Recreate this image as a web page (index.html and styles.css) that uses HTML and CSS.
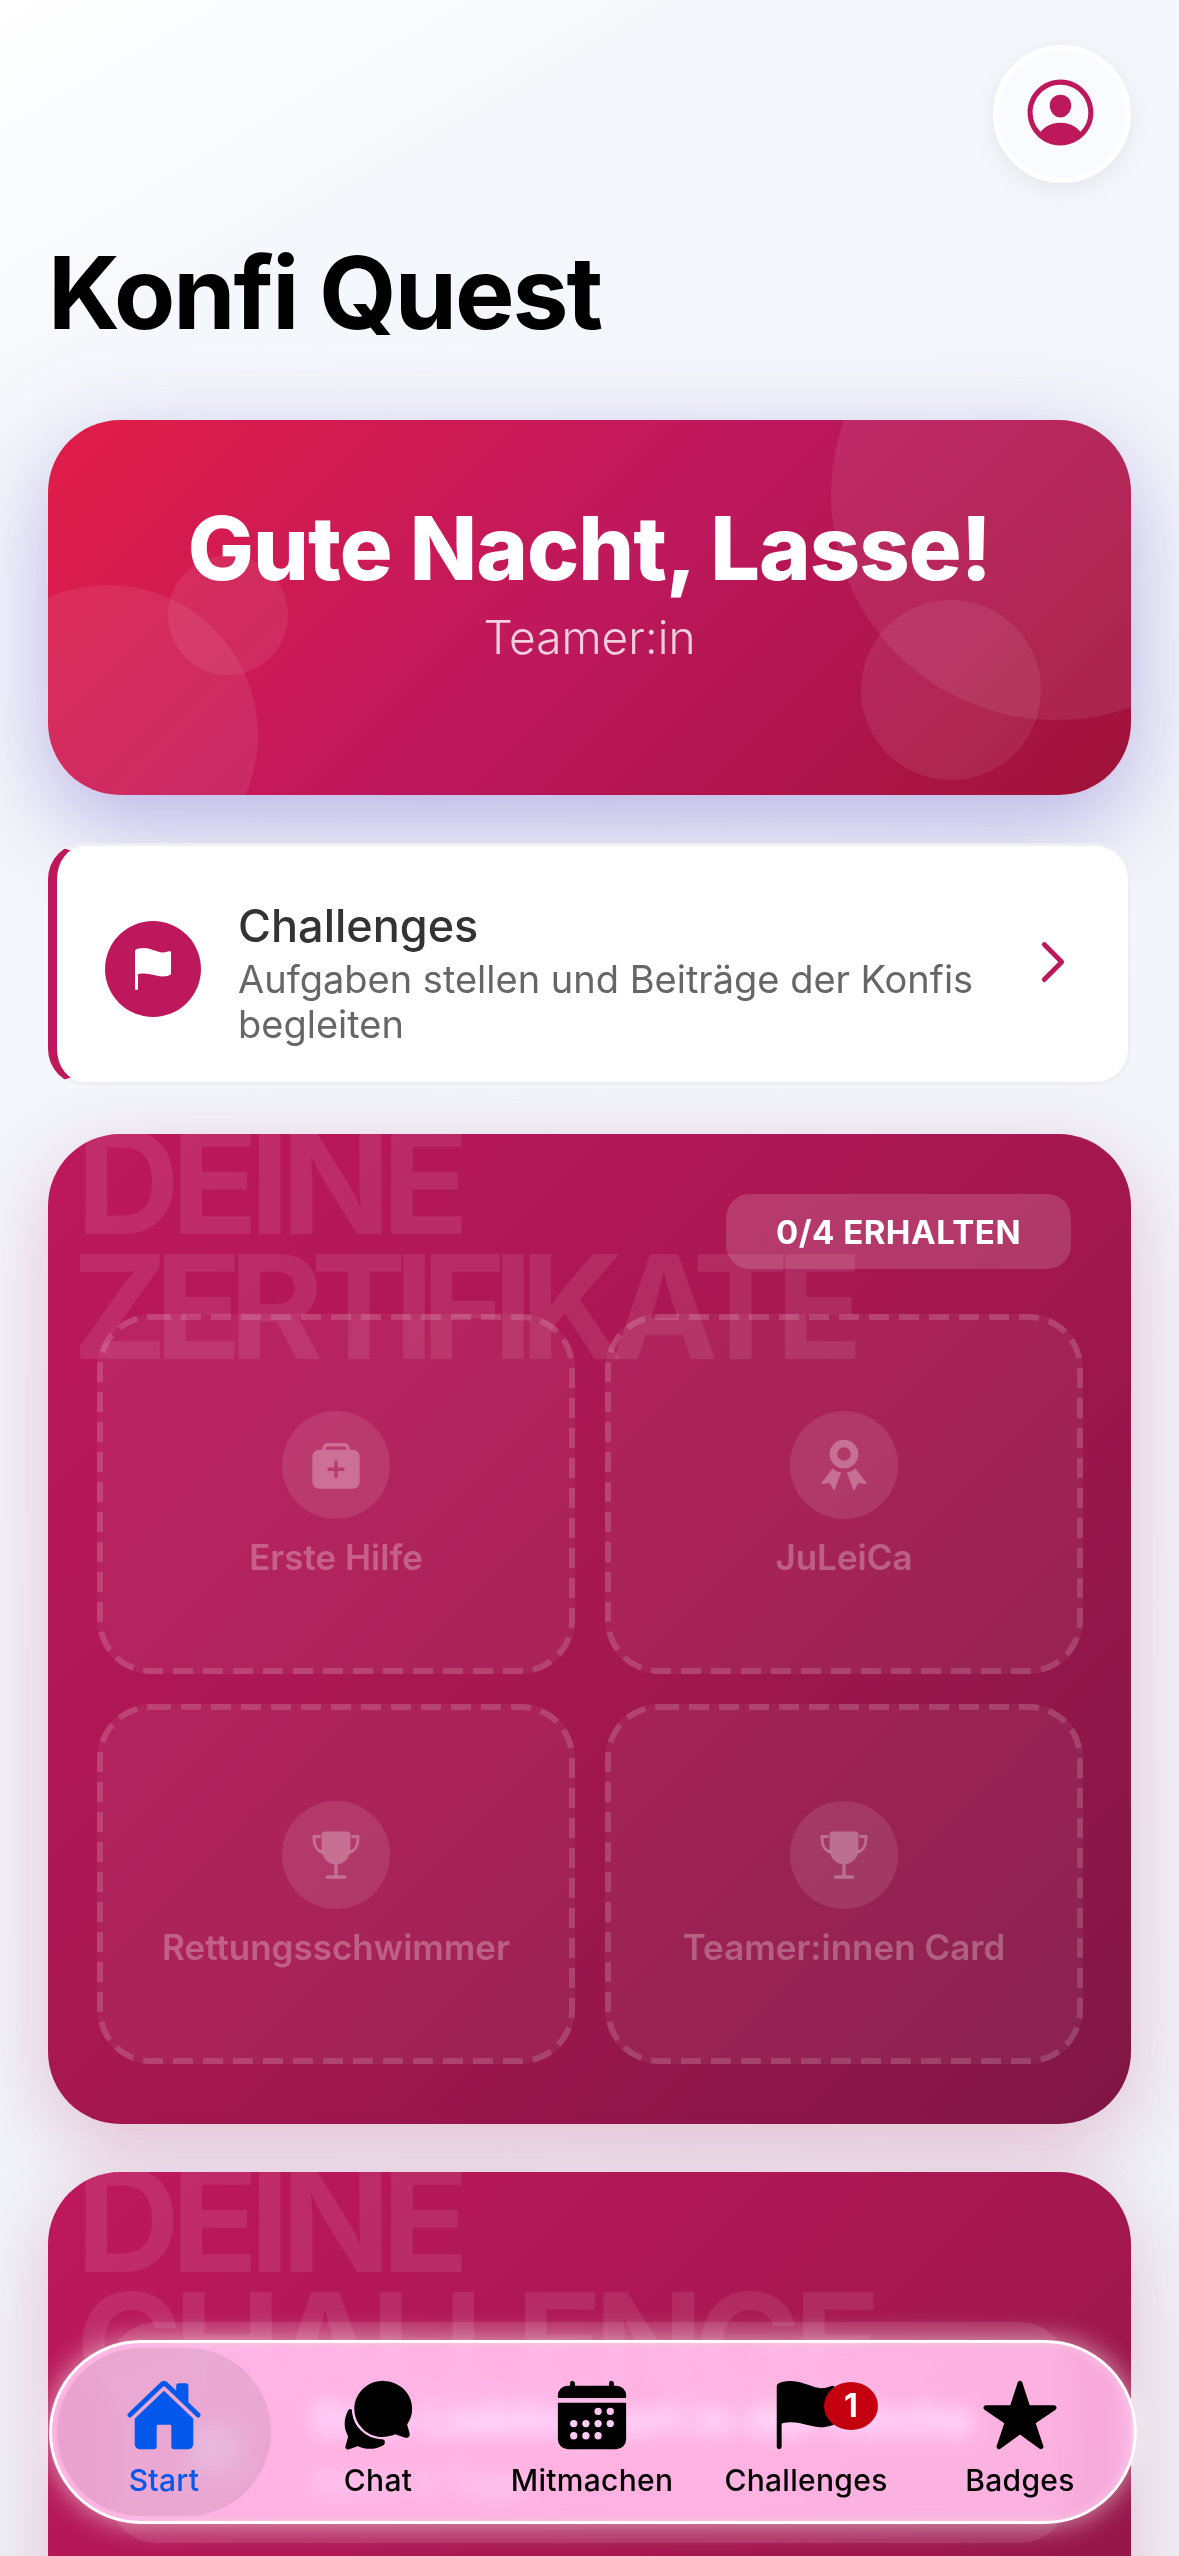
FILE: index.html
```html
<!DOCTYPE html>
<html lang="de">
<head>
    <meta charset="UTF-8">
    <meta name="viewport" content="width=device-width, initial-scale=1.0">
    <title>Konfi Quest</title>
    <link rel="stylesheet" href="styles.css">
</head>
<body>

<div class="page">
    <!-- Header -->
    <div class="top-row">
        <button class="profile-btn">
            <svg class="profile-icon" viewBox="0 0 512 512"><path d="M258.9 48C141.92 46.42 46.42 141.92 48 258.9c1.56 112.19 92.91 203.54 205.1 205.1 117 1.6 212.48-93.9 210.88-210.88C462.44 140.91 371.09 49.56 258.9 48zm126.42 327.25a4 4 0 01-6.14-.32 124.27 124.27 0 00-32.35-29.59C321.37 329 289.11 320 256 320s-65.37 9-90.83 25.34a124.24 124.24 0 00-32.35 29.58 4 4 0 01-6.14.32A175.32 175.32 0 0180 259c-1.63-97.31 78.22-178.76 175.57-179S432 158.81 432 256a175.32 175.32 0 01-46.68 119.25z"/><path d="M256 144c-19.72 0-37.55 7.39-50.22 20.82s-19 32-17.57 51.93C191.11 256 221.52 288 256 288s64.83-32 67.79-71.25c1.48-19.67-4.8-38-17.68-51.67C293.39 151.44 275.59 144 256 144z"/></svg>
        </button>
    </div>
    <h1 class="page-title">Konfi Quest</h1>

    <!-- Greeting -->
    <section class="hero">
        <span class="blob blob-big"></span>
        <span class="blob blob-right"></span>
        <span class="blob blob-left"></span>
        <span class="blob blob-small"></span>
        <h2 class="hero-title">Gute Nacht, Lasse!</h2>
        <p class="hero-role">Teamer:in</p>
    </section>

    <!-- Challenges link -->
    <a class="link-card">
        <span class="link-icon">
            <svg viewBox="0 0 512 512"><path d="M80 480a16 16 0 01-16-16V68.13a24 24 0 0111.9-20.72C88 40.38 112.38 32 160 32c37.21 0 78.83 14.71 115.55 27.68C305.12 70.13 333.05 80 352 80a183.84 183.84 0 0071-14.5 18 18 0 0125 16.58v219.36a20 20 0 01-12 18.31c-8.71 3.81-40.51 16.25-84 16.25-24.14 0-54.38-7.14-86.39-14.71C229.63 312.79 192.43 304 160 304c-36.87 0-55.74 5.58-64 9.11V464a16 16 0 01-16 16z"/></svg>
        </span>
        <span class="link-text">
            <span class="link-title">Challenges</span>
            <span class="link-desc">Aufgaben stellen und Beiträge der Konfis begleiten</span>
        </span>
        <svg class="link-chevron" viewBox="0 0 512 512"><path d="M184 112l144 144-144 144"/></svg>
    </a>

    <!-- Certificates -->
    <section class="panel">
        <div class="panel-bg-title">DEINE<br><span class="tight">ZERTIFIKATE</span></div>
        <div class="panel-head">
            <span class="count-pill">0/4 ERHALTEN</span>
        </div>
        <div class="cert-grid">
            <div class="cert">
                <svg class="cert-dash"><rect x="3" y="3" rx="51" ry="51"/></svg>
                <span class="cert-icon">
                    <svg viewBox="0 0 512 512"><path fill-rule="evenodd" d="M176 48h160a48 48 0 0148 48v16h32a64 64 0 0164 64v240a64 64 0 01-64 64H96a64 64 0 01-64-64V176a64 64 0 0164-64h32V96a48 48 0 0148-48zm0 32a16 16 0 00-16 16v16h192V96a16 16 0 00-16-16zm64 136v64h-64v32h64v64h32v-64h64v-32h-64v-64z"/></svg>
                </span>
                <span class="cert-name">Erste Hilfe</span>
            </div>
            <div class="cert">
                <svg class="cert-dash"><rect x="3" y="3" rx="51" ry="51"/></svg>
                <span class="cert-icon">
                    <svg viewBox="0 0 512 512"><path fill-rule="evenodd" d="M256 16a136 136 0 110 272 136 136 0 010-272zm0 72a64 64 0 100 128 64 64 0 000-128z"/><path d="M148 288c24 22 50 34 82 36l-62 164a8 8 0 01-14 1l-34-62-70 10a8 8 0 01-8-11zM364 288c-24 22-50 34-82 36l62 164a8 8 0 0014 1l34-62 70 10a8 8 0 008-11z"/></svg>
                </span>
                <span class="cert-name">JuLeiCa</span>
            </div>
            <div class="cert">
                <svg class="cert-dash"><rect x="3" y="3" rx="51" ry="51"/></svg>
                <span class="cert-icon">
                    <svg viewBox="0 0 512 512"><path d="M144 32h224a24 24 0 0124 24v152c0 70-56 128-120 134v106h64a16 16 0 0116 16v16H160v-16a16 16 0 0116-16h64V342c-64-6-120-64-120-134V56a24 24 0 0124-24z"/><path d="M112 80H48v32c0 56 32 104 80 120M400 80h64v32c0 56-32 104-80 120" fill="none" stroke="currentColor" stroke-width="28"/></svg>
                </span>
                <span class="cert-name">Rettungsschwimmer</span>
            </div>
            <div class="cert">
                <svg class="cert-dash"><rect x="3" y="3" rx="51" ry="51"/></svg>
                <span class="cert-icon">
                    <svg viewBox="0 0 512 512"><path d="M144 32h224a24 24 0 0124 24v152c0 70-56 128-120 134v106h64a16 16 0 0116 16v16H160v-16a16 16 0 0116-16h64V342c-64-6-120-64-120-134V56a24 24 0 0124-24z"/><path d="M112 80H48v32c0 56 32 104 80 120M400 80h64v32c0 56-32 104-80 120" fill="none" stroke="currentColor" stroke-width="28"/></svg>
                </span>
                <span class="cert-name">Teamer:innen Card</span>
            </div>
        </div>
    </section>

    <!-- Current challenge -->
    <section class="panel panel-challenge">
        <div class="panel-bg-title">DEINE<br>CHALLENGE</div>
        <div class="challenge-box">
            <span class="challenge-icon"></span>
            <span class="challenge-text">
                <span class="challenge-title">Dein Lieblingsort in der Kirche</span>
                <span class="challenge-meta">Noch 3 Tage</span>
            </span>
        </div>
    </section>
</div>

<!-- Tab bar -->
<nav class="tabbar">
    <a class="tab tab-active">
        <svg viewBox="0 0 512 512"><path d="M261.56 101.28a8 8 0 00-11.06 0L66.4 277.15a8 8 0 00-2.47 5.79L63.9 448a32 32 0 0032 32H192a16 16 0 0016-16V328a8 8 0 018-8h80a8 8 0 018 8v136a16 16 0 0016 16h96.06a32 32 0 0032-32V282.94a8 8 0 00-2.47-5.79z"/><path d="M490.91 244.15l-74.8-71.56V64a16 16 0 00-16-16h-48a16 16 0 00-16 16v32l-57.92-55.38C272.77 35.14 264.71 32 256 32c-8.68 0-16.72 3.14-22.14 8.63l-212.7 203.5c-6.22 6-7 15.87-1.34 22.37A16 16 0 0043 267.56L250.5 69.28a8 8 0 0111.06 0l207.52 198.28a16 16 0 0022.59-.44c6.14-6.36 5.63-16.86-.76-22.97z"/></svg>
        <span>Start</span>
    </a>
    <a class="tab">
        <svg viewBox="0 0 512 512"><path d="M439.9 405.6a26.77 26.77 0 01-9.59-2l-56.78-20.13-.42-.17a9.88 9.88 0 00-3.91-.76 10.32 10.32 0 00-3.62.66c-1.38.52-13.81 5.19-26.85 8.77-7.07 1.94-31.68 8.27-51.43 8.27-50.48 0-97.68-19.4-132.89-54.63A183.38 183.38 0 01100.3 215.1a175.9 175.9 0 014.06-37.58c8.79-40.62 32.07-77.57 65.55-104A194.76 194.76 0 01290.3 32c52.21 0 100.86 20 137 56.18 34.16 34.27 52.88 79.33 52.73 126.87a177.86 177.86 0 01-30.3 99.15l-.19.28-.74 1c-.17.23-.34.45-.5.68l-.15.27a21.63 21.63 0 00-1.08 2.09l15.74 55.94a26.42 26.42 0 011.12 7.11 24 24 0 01-24.03 24.03z"/><path d="M299.87 425.39a15.74 15.74 0 00-10.29-8.1c-5.78-1.53-12.52-1.27-17.67-1.65a201.78 201.78 0 01-128.82-58.75A199.21 199.21 0 0186.4 244.16C85 234.42 85 232 85 222a16 16 0 00-27 8c-9 20-21 48-21 82 0 28 7 54 20 78 2 4 3 8 2 12l-17 60a16 16 0 0020 20l56-20c4-1 8-1 11 0 22 9 46 16 74 16 30 0 60-9 88-24 8-5 12-14 9-22z"/></svg>
        <span>Chat</span>
    </a>
    <a class="tab">
        <svg viewBox="0 0 512 512"><path d="M480 128a64 64 0 00-64-64h-16V48.45c0-8.61-6.62-16-15.23-16.43A16 16 0 00368 48v16H144V48.45c0-8.61-6.62-16-15.23-16.43A16 16 0 00112 48v16H96a64 64 0 00-64 64v12a4 4 0 004 4h440a4 4 0 004-4z"/><path d="M32 416a64 64 0 0064 64h320a64 64 0 0064-64V179a3 3 0 00-3-3H35a3 3 0 00-3 3zM376 208a24 24 0 11-24 24 24 24 0 0124-24zM296 208a24 24 0 11-24 24 24 24 0 0124-24zM376 288a24 24 0 11-24 24 24 24 0 0124-24zM296 288a24 24 0 11-24 24 24 24 0 0124-24zM216 288a24 24 0 11-24 24 24 24 0 0124-24zM136 288a24 24 0 11-24 24 24 24 0 0124-24zM136 368a24 24 0 11-24 24 24 24 0 0124-24zM216 368a24 24 0 11-24 24 24 24 0 0124-24zM296 368a24 24 0 11-24 24 24 24 0 0124-24z"/></svg>
        <span>Mitmachen</span>
    </a>
    <a class="tab">
        <span class="tab-icon-wrap">
            <svg viewBox="0 0 512 512"><path d="M80 480a16 16 0 01-16-16V68.13a24 24 0 0111.9-20.72C88 40.38 112.38 32 160 32c37.21 0 78.83 14.71 115.55 27.68C305.12 70.13 333.05 80 352 80a183.84 183.84 0 0071-14.5 18 18 0 0125 16.58v219.36a20 20 0 01-12 18.31c-8.71 3.81-40.51 16.25-84 16.25-24.14 0-54.38-7.14-86.39-14.71C229.63 312.79 192.43 304 160 304c-36.87 0-55.74 5.58-64 9.11V464a16 16 0 01-16 16z"/></svg>
            <span class="tab-badge">1</span>
        </span>
        <span>Challenges</span>
    </a>
    <a class="tab">
        <svg viewBox="0 0 512 512"><path d="M394 480a16 16 0 01-9.39-3L256 383.76 127.39 477a16 16 0 01-24.55-18.08L153 310.35 23 221.2a16 16 0 019-29.2h160.38l48.4-148.95a16 16 0 0130.44 0l48.4 149H480a16 16 0 019.05 29.2L359 310.35l50.13 148.53A16 16 0 01394 480z"/></svg>
        <span>Badges</span>
    </a>
</nav>

</body>
</html>
```
FILE: styles.css
```css
* {
    box-sizing: border-box;
}
html, body {
    margin: 0;
    padding: 0;
}
body {
    position: relative;
    width: 1179px;
    height: 2556px;
    overflow: hidden;
    font-family: Inter, "Noto Sans", sans-serif;
    background: linear-gradient(150deg, #ffffff 0%, #f4f7fb 14%, #eff2f7 100%);
}
.page {
    padding: 45px 48px 0;
    display: flex;
    flex-direction: column;
}
.top-row {
    display: flex;
    justify-content: flex-end;
}
.profile-btn {
    width: 138px;
    height: 138px;
    border-radius: 50%;
    border: 5px solid #ffffff;
    background: #f9fbfe;
    box-shadow: 0 6px 24px rgba(0, 0, 0, 0.07);
    padding: 0 3px 3px 0;
    display: flex;
    align-items: center;
    justify-content: center;
}
.profile-icon {
    width: 81px;
    height: 81px;
    fill: #be185d;
}
.page-title {
    margin: 50px 0 0;
    font-size: 100px;
    line-height: 120px;
    font-weight: 700;
    letter-spacing: -2px;
    color: #000000;
}

/* greeting card */
.hero {
    position: relative;
    overflow: hidden;
    flex: none;
    margin-top: 67px;
    height: 375px;
    border-radius: 72px;
    background: linear-gradient(135deg, #e11d48 0%, #be185d 50%, #9f1239 100%);
    box-shadow: 0 30px 90px rgba(80, 50, 190, 0.34);
    text-align: center;
    color: #ffffff;
}
.blob {
    position: absolute;
    border-radius: 50%;
    background: rgba(255, 255, 255, 0.08);
}
.blob-big {
    width: 450px;
    height: 450px;
    top: -150px;
    right: -150px;
}
.blob-right {
    width: 180px;
    height: 180px;
    bottom: 15px;
    right: 90px;
}
.blob-left {
    width: 300px;
    height: 300px;
    bottom: -90px;
    left: -90px;
}
.blob-small {
    width: 120px;
    height: 120px;
    top: 135px;
    left: 120px;
}
.hero-title {
    position: relative;
    margin: 74px 0 0;
    font-size: 88px;
    line-height: 108px;
    font-weight: 800;
    letter-spacing: -1px;
}
.hero-role {
    position: relative;
    margin: 6px 0 0;
    font-size: 46px;
    line-height: 58px;
    font-weight: 300;
    color: rgba(255, 255, 255, 0.8);
}

/* challenges link */
.link-card {
    position: relative;
    flex: none;
    margin-top: 48px;
    height: 242px;
    display: flex;
    align-items: center;
    background: #ffffff;
    border: 3px solid #eeeef5;
    border-left: 9px solid #be185d;
    border-radius: 36px;
    padding-left: 48px;
}
.link-icon {
    flex: none;
    margin-top: 10px;
    width: 96px;
    height: 96px;
    border-radius: 50%;
    background: #be185d;
    display: flex;
    align-items: center;
    justify-content: center;
    fill: #ffffff;
}
.link-icon svg {
    width: 48px;
    height: 48px;
}
.link-text {
    flex: 1;
    margin: 16px 0 0 37px;
    display: flex;
    flex-direction: column;
}
.link-title {
    font-size: 45px;
    line-height: 56px;
    font-weight: 500;
    color: #333333;
}
.link-desc {
    margin-top: 3px;
    width: 770px;
    font-size: 38px;
    line-height: 45px;
    color: #666666;
}
.link-chevron {
    flex: none;
    width: 62px;
    height: 62px;
    margin: -4px 44px 0 0;
    fill: none;
    stroke: #be185d;
    stroke-width: 40;
    stroke-linecap: round;
    stroke-linejoin: round;
}

/* dark panels */
.panel {
    position: relative;
    overflow: hidden;
    flex: none;
    margin-top: 48px;
    height: 990px;
    padding: 60px 48px 60px 49px;
    border-radius: 72px;
    background: linear-gradient(135deg, #be185d 0%, #a5174f 50%, #7f1644 100%);
    box-shadow: 0 24px 80px rgba(190, 24, 93, 0.24);
}
.link-card + .panel {
    margin-top: 49px;
}
.panel-bg-title {
    position: absolute;
    top: -15px;
    left: 28px;
    font-size: 144px;
    line-height: 125px;
    font-weight: 700;
    letter-spacing: -9px;
    color: rgba(255, 255, 255, 0.09);
    white-space: nowrap;
}
.panel-bg-title .tight {
    letter-spacing: -13px;
    margin-left: -4px;
}
.panel-head {
    position: relative;
    display: flex;
    justify-content: flex-end;
    margin-right: 12px;
}
.count-pill {
    width: 345px;
    height: 75px;
    border-radius: 24px;
    background: rgba(255, 255, 255, 0.15);
    display: flex;
    align-items: center;
    justify-content: center;
    font-size: 33px;
    font-weight: 700;
    letter-spacing: 0.5px;
    color: #ffffff;
}
.cert-grid {
    position: relative;
    margin-top: 45px;
    display: grid;
    grid-template-columns: 1fr 1fr;
    grid-auto-rows: 360px;
    gap: 30px;
}
.cert {
    position: relative;
    display: flex;
    flex-direction: column;
    align-items: center;
    justify-content: center;
    border-radius: 54px;
    background: rgba(255, 255, 255, 0.055);
    color: rgba(255, 255, 255, 0.28);
}
.cert-dash {
    position: absolute;
    top: 0;
    left: 0;
    width: 100%;
    height: 100%;
}
.cert-dash rect {
    width: calc(100% - 6px);
    height: calc(100% - 6px);
    fill: none;
    stroke: rgba(255, 255, 255, 0.15);
    stroke-width: 6;
    stroke-dasharray: 20 10;
}
.cert-icon {
    width: 108px;
    height: 108px;
    border-radius: 50%;
    background: rgba(255, 255, 255, 0.1);
    display: flex;
    align-items: center;
    justify-content: center;
    fill: currentColor;
}
.cert-icon svg {
    width: 54px;
    height: 54px;
}
.cert-name {
    margin-top: 18px;
    font-size: 35px;
    line-height: 40px;
    font-weight: 600;
}

/* challenge behind the tab bar */
.panel-challenge {
    height: 1000px;
    padding-top: 0;
}
.challenge-box {
    position: absolute;
    top: 150px;
    left: 61px;
    width: 959px;
    height: 221px;
    border-radius: 48px;
    background: rgba(255, 255, 255, 0.1);
    display: flex;
    align-items: center;
    padding: 30px 0 0 81px;
    color: #ffffff;
}
.challenge-icon {
    flex: none;
    width: 50px;
    height: 50px;
    border-radius: 12px;
    background: rgba(255, 255, 255, 0.4);
}
.challenge-text {
    margin-left: 72px;
    display: flex;
    flex-direction: column;
    gap: 14px;
}
.challenge-title {
    font-size: 45px;
    line-height: 54px;
    font-weight: 700;
}
.challenge-meta {
    font-size: 36px;
    line-height: 44px;
    color: rgba(255, 255, 255, 0.7);
}

/* tab bar over the page */
.tabbar {
    position: absolute;
    left: 49px;
    top: 2340px;
    width: 1088px;
    height: 184px;
    padding: 5px;
    display: flex;
    border: 3px solid #ffffff;
    border-radius: 92px;
    background: rgba(255, 206, 248, 0.8);
    -webkit-backdrop-filter: blur(10px) brightness(1.4);
    backdrop-filter: blur(10px) brightness(1.4);
    box-shadow: 0 0 28px rgba(255, 255, 255, 0.6), inset 0 0 12px rgba(255, 255, 255, 0.3);
}
.tab {
    flex: none;
    width: 214px;
    display: flex;
    flex-direction: column;
    align-items: center;
    padding-top: 28px;
    border-radius: 84px;
    font-size: 30px;
    line-height: 36px;
    font-weight: 500;
    letter-spacing: 0.3px;
    color: #000000;
    fill: currentColor;
}
.tab svg {
    display: block;
    width: 78px;
    height: 78px;
}
.tab > span:last-child {
    margin-top: 8px;
}
.tab-active {
    background: rgba(181, 143, 166, 0.3);
    color: #0558ec;
}
.tab-icon-wrap {
    position: relative;
    display: block;
    width: 78px;
    height: 78px;
}
.tab-badge {
    position: absolute;
    top: 6px;
    left: 57px;
    width: 54px;
    height: 48px;
    border-radius: 50%;
    background: #c40010;
    display: flex;
    align-items: center;
    justify-content: center;
    font-size: 32px;
    font-weight: 700;
    color: #ffffff;
}
```
